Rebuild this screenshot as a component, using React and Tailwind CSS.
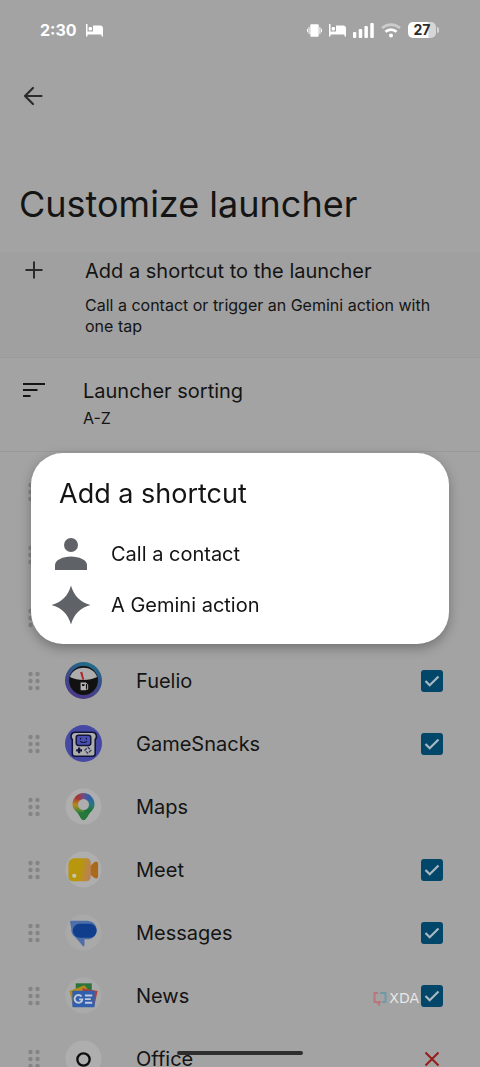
import { useState } from "react";

const apps = [
  { name: "Fuelio", icon: FuelioIcon, control: "check" },
  { name: "GameSnacks", icon: GameSnacksIcon, control: "check" },
  { name: "Maps", icon: MapsIcon },
  { name: "Meet", icon: MeetIcon, control: "check" },
  { name: "Messages", icon: MessagesIcon, control: "check" },
  { name: "News", icon: NewsIcon, control: "check" },
  { name: "Office", icon: OfficeIcon, control: "remove" },
];

function BedIcon() {
  return (
    <svg className="w-[17px] h-[13px]" viewBox="0 0 17 13" fill="currentColor">
      <path d="M0 0h1.500v7.500H7V1.500h7A3 3 0 0 1 17 4.500V12.500h-1.500V10.500h-14v2H0z" />
      <rect x="2.600" y="3" width="3.400" height="3.600" rx="1" />
    </svg>
  );
}

function VibrateIcon() {
  return (
    <svg className="w-[15px] h-[13px]" viewBox="0 0 15 13" fill="currentColor">
      <rect x="3.300" y="0.300" width="8.400" height="12.400" rx="1" />
      <path d="M1.600 3h1v7h-1zM12.400 3h1v7h-1zM0 4.800h.9v3.400H0zM14.100 4.800h.9v3.400h-.9z" />
    </svg>
  );
}

function SignalIcon() {
  return (
    <svg className="w-[21px] h-[15px]" viewBox="0 0 21 15" fill="currentColor">
      <rect x="0" y="9" width="3.300" height="6" rx="1" />
      <rect x="5.700" y="6" width="3.500" height="9" rx="1" />
      <rect x="11.400" y="3" width="3.500" height="12" rx="1" />
      <rect x="17.300" y="0" width="3.500" height="15" rx="1" />
    </svg>
  );
}

function WifiIcon() {
  return (
    <svg className="w-5 h-[15px]" viewBox="0 0 20 15" fill="none" stroke="#fff" strokeWidth="2.800">
      <path d="M1 5C6.300.4 13.700.4 19 5" opacity=".45" />
      <path d="M4.500 8.800c3.200-2.900 7.800-2.900 11 0" />
      <circle cx="10" cy="12.600" r="2" fill="#fff" stroke="none" />
    </svg>
  );
}

function StatusBar() {
  return (
    <div className="flex h-15 items-center pl-10 pr-[41px] text-white">
      <span className="text-[16px] leading-6 font-bold">2:30</span>
      <div className="ml-[9px]">
        <BedIcon />
      </div>
      <div className="ml-auto flex items-center gap-[7px]">
        <VibrateIcon />
        <BedIcon />
        <SignalIcon />
        <WifiIcon />
        <div className="flex items-center gap-px">
          <span className="w-7 h-4 rounded-[5px] bg-linear-to-r from-white from-70% to-[#d6d6d6] to-75% text-center text-[14px] leading-4 font-bold text-[#2c2c2c]">
            27
          </span>
          <span className="w-0.5 h-1.5 rounded-r bg-[#d6d6d6]" />
        </div>
      </div>
    </div>
  );
}

function DragHandle() {
  return (
    <svg className="w-3 h-5 shrink-0" viewBox="0 0 12 20" fill="#848484">
      {[3, 10, 17].map((y) => (
        <g key={y}>
          <circle cx="2.500" cy={y} r="2.200" />
          <circle cx="9.500" cy={y} r="2.200" />
        </g>
      ))}
    </svg>
  );
}

function FuelioIcon() {
  return (
    <svg viewBox="0 0 38 38">
      <defs>
        <linearGradient id="fuelio" x1="0.300" y1="1" x2="0.700" y2="0">
          <stop offset="0" stopColor="#4c3788" />
          <stop offset="0.500" stopColor="#3c4a88" />
          <stop offset="1" stopColor="#1d6f8a" />
        </linearGradient>
      </defs>
      <circle cx="19" cy="19" r="19" fill="url(#fuelio)" />
      <circle cx="19" cy="19" r="14.800" fill="#111" />
      <path d="M5 15.500C7.500 8.500 13 5.800 19 5.800s11.500 2.700 14 9.700c-8 4-20 4-28 0z" fill="#adadad" />
      <path d="M15.500 10.500l2.200-.5 2 8-1.700.4z" fill="#b0262a" />
      <path d="M16 21h5.500v8H16z" fill="#b5b5b5" />
      <path d="M17.500 22.700h2.500v2h-2.500z" fill="#111" />
      <path d="M21.500 21.500l1.800 1.700V28h-1.500" fill="none" stroke="#b5b5b5" />
    </svg>
  );
}

function GameSnacksIcon() {
  return (
    <svg viewBox="0 0 38 38">
      <circle cx="19" cy="19" r="19" fill="#4649a4" />
      <path
        d="M10.500 7.500h17.500c4.500 0 5.500 5 3 7.500V29.500c0 1.500-1 2.500-2.500 2.500H10c-1.500 0-2.500-1-2.500-2.500V15C5 12.500 6 7.500 10.500 7.500z"
        fill="#adadad"
        stroke="#111436"
        strokeWidth="1.600"
      />
      <rect x="11.500" y="10.500" width="15" height="10.500" rx="2.500" fill="#4b50b5" stroke="#111436" strokeWidth="1.500" />
      <path d="M16 13v1.800M22 13v1.800M15.500 16.500c1.500 2 5.500 2 7 0" fill="none" stroke="#111436" strokeWidth="1.200" />
      <path d="M14.500 23v6M11.500 26h6" stroke="#111436" strokeWidth="2.200" />
      <path d="M23.500 22.800l3.200 3.200-3.200 3.200-3.200-3.200z" fill="none" stroke="#33365d" strokeWidth="1.300" strokeDasharray="3 1.500" />
    </svg>
  );
}

function MapsIcon() {
  return (
    <svg viewBox="0 0 38 38">
      <defs>
        <clipPath id="pin">
          <path d="M19 5.500a11.300 11.300 0 0 1 11.300 11.300c0 4.500-3 6.700-5.500 10-2 2.600-3.500 6.200-5.800 6.200s-3.300-3.600-5.300-6.200c-2.500-3.300-6-5.500-6-10A11.300 11.300 0 0 1 19 5.500z" />
        </clipPath>
        <linearGradient id="pin-left" x1="0" y1="0" x2="0" y2="1">
          <stop offset="0.200" stopColor="#a73a35" />
          <stop offset="0.450" stopColor="#b68b1b" />
          <stop offset="0.700" stopColor="#32833f" />
        </linearGradient>
        <linearGradient id="pin-right" x1="0" y1="0" x2="0" y2="1">
          <stop offset="0.150" stopColor="#355faa" />
          <stop offset="0.450" stopColor="#257978" />
          <stop offset="0.650" stopColor="#1f7538" />
        </linearGradient>
        <linearGradient id="pin-top" x1="0" y1="0" x2="1" y2="0">
          <stop offset="0.200" stopColor="#a83630" />
          <stop offset="0.500" stopColor="#704b86" />
          <stop offset="0.750" stopColor="#315da9" />
        </linearGradient>
      </defs>
      <circle cx="19" cy="19" r="18.500" fill="#aeaeae" />
      <g clipPath="url(#pin)">
        <path d="M6 4h13v30H6z" fill="url(#pin-left)" />
        <path d="M19 4h13v30H19z" fill="url(#pin-right)" />
        <path d="M8 4h22l-5 8H12z" fill="url(#pin-top)" />
        <path d="M14 25h10v10H14z" fill="#27773b" />
      </g>
      <circle cx="19" cy="17" r="5.700" fill="#aeaeae" />
    </svg>
  );
}

function MeetIcon() {
  return (
    <svg viewBox="0 0 38 38">
      <defs>
        <linearGradient id="meet" x1="0" y1="0" x2="1" y2="0.150">
          <stop offset="0.600" stopColor="#b8960e" />
          <stop offset="1" stopColor="#b98155" />
        </linearGradient>
      </defs>
      <circle cx="19" cy="19" r="18.500" fill="#aeaeae" />
      <path d="M24 17.500l6-6c1.500-1.500 4-1 4 1.500v13c0 2.500-2.500 3-4 1.500l-6-5z" fill="#aa6a1b" />
      <path d="M9.500 7.500H22a4.500 4.500 0 0 1 4.500 4.500v14.500A4.500 4.500 0 0 1 22 31H8a4.500 4.500 0 0 1-4.500-4.500v-13a6 6 0 0 1 6-6z" fill="url(#meet)" />
      <circle cx="9.500" cy="25.500" r="2.200" fill="#c9c3ab" />
    </svg>
  );
}

function MessagesIcon() {
  return (
    <svg viewBox="0 0 38 38">
      <circle cx="19" cy="19" r="18.500" fill="#a9a9a9" />
      <path
        d="M6.500 7H22c6.500 0 10.500 4 10.500 9.500 0 5-3.500 9-8.500 9.500h-4v5.500c0 1.500-1 2-2 1-3-3-4.500-6-7.500-8.500C7.500 21.500 6 19 6.500 15L5.300 9C5 7.800 5.500 7 6.500 7z"
        fill="#4d6fa9"
      />
      <rect x="8" y="10" width="24.500" height="14.500" rx="7.200" fill="#103e8d" />
    </svg>
  );
}

function NewsIcon() {
  return (
    <svg viewBox="0 0 38 38">
      <circle cx="19" cy="19" r="18.500" fill="#aaaaaa" />
      <path d="M11 6.500h16.500v8H11z" fill="#29753b" />
      <path d="M4.500 14.500L20 8.500l5 6-14 14H8z" fill="#b28b1d" />
      <path d="M18 11.500l15.500 3L30.500 28H18z" fill="#ae3f39" />
      <rect x="7.500" y="14" width="23" height="17" rx="1" fill="#315fad" />
      <path d="M17 20a4 4 0 1 0 .8 3H14.500" fill="none" stroke="#c1cad8" strokeWidth="2" />
      <path d="M20.500 19H28M20.500 22.700h6M20.500 26.400H28" stroke="#c1cad8" strokeWidth="2" />
    </svg>
  );
}

function OfficeIcon() {
  return (
    <svg viewBox="0 0 38 38">
      <circle cx="19" cy="19" r="18.500" fill="#aeaeae" />
      <circle cx="19" cy="20" r="6.300" fill="none" stroke="#0d0d0d" strokeWidth="2.400" />
    </svg>
  );
}

function CheckBox({ id }) {
  const [checked, setChecked] = useState(true);
  return (
    <span className="grid">
      <input
        id={id}
        type="checkbox"
        checked={checked}
        onChange={(e) => setChecked(e.target.checked)}
        className="peer col-start-1 row-start-1 size-[22px] appearance-none rounded-[3px] border-2 border-[#02466a] checked:bg-[#02466a]"
      />
      <svg
        className="pointer-events-none invisible col-start-1 row-start-1 size-[22px] peer-checked:visible"
        viewBox="0 0 22 22"
        fill="none"
        stroke="#a9b8c1"
        strokeWidth="2.200"
      >
        <path d="M4.500 11l4.200 4.300L17.500 6.500" />
      </svg>
    </span>
  );
}

function AppRow({ name, icon: Icon, control }) {
  const id = `app-${name.toLowerCase()}`;
  return (
    <li className="flex h-[63px] items-center pl-7 pr-[37px]">
      <DragHandle />
      <span className="ml-[25px] size-[37px] shrink-0">
        <Icon />
      </span>
      {control === "check" ? (
        <label htmlFor={id} className="ml-[34px] flex-1 text-[20px] leading-7">
          {name}
        </label>
      ) : (
        <span className="ml-[34px] flex-1 text-[20px] leading-7">{name}</span>
      )}
      {control === "check" && <CheckBox id={id} />}
      {control === "remove" && (
        <button type="button" aria-label={`Remove ${name}`} className="size-[22px]">
          <svg viewBox="0 0 22 22" stroke="#951d1a" strokeWidth="2">
            <path d="M4.500 4.500l13 13M17.500 4.500l-13 13" />
          </svg>
        </button>
      )}
    </li>
  );
}

function ShortcutDialog() {
  return (
    <div className="fixed inset-0 flex items-center px-[31px] pt-[30px]">
      <div
        role="dialog"
        aria-labelledby="dialog-title"
        className="w-full rounded-[32px] bg-white pt-[23px] pb-[14px] shadow-[0_4px_12px_rgba(0,0,0,0.3)]"
      >
        <h2 id="dialog-title" className="pl-7 text-[27px] leading-9">
          Add a shortcut
        </h2>
        <div className="mt-4">
          <button type="button" className="flex h-[51px] w-full items-center gap-5 pl-5 text-[20px] leading-7">
            <svg className="size-10" viewBox="0 0 40 40" fill="#5f6368">
              <circle cx="20" cy="11" r="7" />
              <path d="M4 36v-5c0-5 8-8.500 16-8.500S36 26 36 31v5z" />
            </svg>
            Call a contact
          </button>
          <button type="button" className="flex h-[51px] w-full items-center gap-5 pl-5 text-[20px] leading-7">
            <svg className="size-10" viewBox="0 0 40 40" fill="#5f6368">
              <path d="M20 .5C23 11 29 17 39.500 20 29 23 23 29 20 39.500 17 29 11 23 .5 20 11 17 17 11 20 .5z" />
            </svg>
            A Gemini action
          </button>
        </div>
      </div>
    </div>
  );
}

export default function App() {
  return (
    <div className="relative h-screen overflow-hidden bg-[#a3a3a3] font-['Inter',sans-serif] text-[#141414]">
      <StatusBar />
      <header>
        <div className="flex h-[72px] items-center pl-[21px]">
          <button type="button" aria-label="Back" className="size-6">
            <svg viewBox="0 0 24 24" fill="none" stroke="#2b2b2b" strokeWidth="2.200" strokeLinecap="round" strokeLinejoin="round">
              <path d="M20.500 12H4M12 4L4 12l8 8" />
            </svg>
          </button>
        </div>
        <h1 className="pt-12 pb-6 pl-[19px] text-[36px] leading-12">Customize launcher</h1>
      </header>

      <main>
        <button
          type="button"
          className="flex w-full items-start border-b border-[#999999] bg-[#a0a0a0] pt-[5px] pr-10 pb-5 pl-[22px] text-left"
        >
          <svg className="mt-px size-6 shrink-0" viewBox="0 0 24 24" stroke="#2b2b2b" strokeWidth="2">
            <path d="M12 3.500v17M3.500 12h17" />
          </svg>
          <span className="ml-[39px]">
            <span className="block text-[20px] leading-7">Add a shortcut to the launcher</span>
            <span className="mt-2.5 block text-[16px] leading-[21px]">
              Call a contact or trigger an Gemini action with one tap
            </span>
          </span>
        </button>
        <button
          type="button"
          className="flex w-full items-start border-b border-[#999999] pt-[19px] pb-[22px] pl-[22px] text-left"
        >
          <svg className="mt-px size-6 shrink-0" viewBox="0 0 24 24" stroke="#141414" strokeWidth="2.200">
            <path d="M1 6h22M1 12h14.500M1 18h7.500" />
          </svg>
          <span className="ml-[37px]">
            <span className="block text-[20px] leading-7">Launcher sorting</span>
            <span className="mt-[3px] block text-[16px] leading-[21px]">A-Z</span>
          </span>
        </button>

        <ul className="pt-2">
          {/* rows covered by the dialog */}
          {[0, 1, 2].map((row) => (
            <li key={row} className="flex h-[63px] items-center pl-7">
              <DragHandle />
            </li>
          ))}
          {apps.map((app) => (
            <AppRow key={app.name} {...app} />
          ))}
        </ul>
      </main>

      <div className="absolute right-[61px] bottom-[59px] flex items-center gap-0.5 text-white/75">
        <svg className="w-[14px] h-[15px]" viewBox="0 0 14 15" fill="none" strokeWidth="2">
          <path d="M5 2H1.500v9H4l2 2.500V11h2" stroke="#b9777c" />
          <path d="M7 2h5.500v9H9" stroke="#7198a5" />
        </svg>
        <span className="font-['DejaVu_Sans',sans-serif] text-[14px] leading-5">XDA</span>
      </div>
      <div className="absolute inset-x-0 bottom-3 mx-auto h-1 w-[126px] rounded-full bg-[#2e2e2e]" />

      <ShortcutDialog />
    </div>
  );
}
